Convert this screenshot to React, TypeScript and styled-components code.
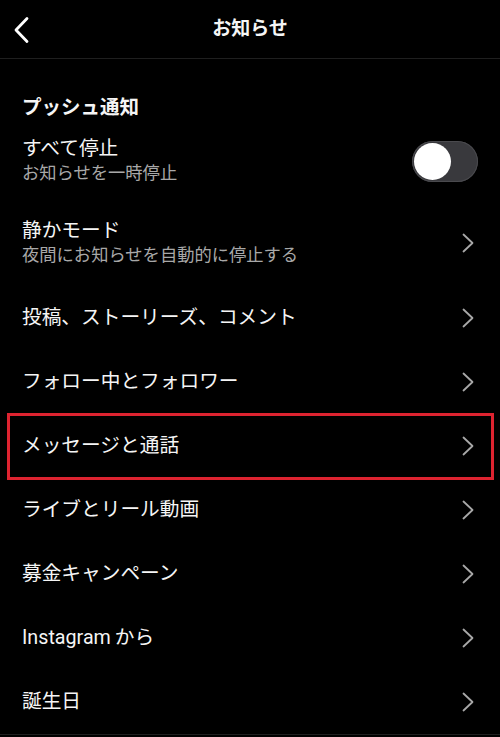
import React from 'react';
import styled, { createGlobalStyle } from 'styled-components';

const GlobalStyle = createGlobalStyle`
  html, body {
    margin: 0;
    padding: 0;
    background: #000;
  }
  body {
    font-family: Roboto, "Noto Sans CJK JP", "Noto Sans", sans-serif;
    color: #f5f5f5;
  }
`;

const Screen = styled.div`
  width: 500px;
  height: 737px;
  overflow: hidden;
  background: #000;
`;

const Header = styled.header`
  position: relative;
  height: 58px;
  display: flex;
  align-items: center;
  justify-content: center;
  border-bottom: 1px solid #1f1f1f;
`;

const BackButton = styled.button`
  position: absolute;
  left: 10px;
  top: 15px;
  width: 22px;
  height: 30px;
  padding: 0;
  border: none;
  background: none;
  display: flex;
  align-items: center;
  justify-content: center;
`;

const Title = styled.h1`
  margin: 0;
  font-size: 19px;
  font-weight: 700;
  line-height: 24px;
  color: #f5f5f5;
`;

const SectionTitle = styled.h2`
  margin: 0;
  padding: 29px 22px 0;
  height: 34px;
  display: flex;
  align-items: center;
  font-size: 19.5px;
  font-weight: 700;
  color: #f5f5f5;
`;

const List = styled.div`
  display: flex;
  flex-direction: column;
  border-bottom: 1px solid #1f1f1f;
`;

const Row = styled.div<{ $height: number; $highlight?: boolean }>`
  position: relative;
  height: ${(p) => p.$height}px;
  padding: 0 26px 0 22px;
  display: flex;
  align-items: center;
  justify-content: space-between;
  box-sizing: border-box;

  ${(p) =>
    p.$highlight &&
    `
    &::after {
      content: '';
      position: absolute;
      top: -1px;
      bottom: -2px;
      left: 7px;
      right: 6px;
      border: 3px solid #de2330;
      pointer-events: none;
    }
  `}
`;

const TextBlock = styled.div`
  display: flex;
  flex-direction: column;
  gap: 3px;
`;

const Label = styled.div`
  font-size: 19.7px;
  line-height: 22px;
  color: #f5f5f5;
`;

const SubLabel = styled.div`
  font-size: 17.3px;
  line-height: 21px;
  color: #a8a8a8;
`;

const Brand = styled.span`
  margin-right: 4px;
`;

const Toggle = styled.div`
  width: 66px;
  height: 41px;
  margin-right: -4px;
  border-radius: 21px;
  background: #39393d;
  box-shadow: inset 0 0 0 1px #4a4a4e;
  display: flex;
  align-items: center;
  padding: 2px;
  box-sizing: border-box;
`;

const Knob = styled.div`
  width: 37px;
  height: 37px;
  border-radius: 50%;
  background: #fff;
`;

const Chevron = () => (
  <svg width="12" height="20" viewBox="0 0 12 20" fill="none">
    <path d="M1.5 1.5 L10.5 10 L1.5 18.5" stroke="#a8a8a8" strokeWidth="1.8" strokeLinecap="round" strokeLinejoin="round" />
  </svg>
);

const items = [
  'フォロー中とフォロワー',
  'メッセージと通話',
  'ライブとリール動画',
  '募金キャンペーン',
  'Instagramから',
  '誕生日',
];

const renderLabel = (item: string) =>
  item.startsWith('Instagram') ? (
    <>
      <Brand>Instagram</Brand>
      {item.slice('Instagram'.length)}
    </>
  ) : (
    item
  );

export default function App() {
  return (
    <Screen>
      <GlobalStyle />
      <Header>
        <BackButton aria-label="戻る">
          <svg width="18" height="28" viewBox="0 0 18 28" fill="none">
            <path d="M15 2.5 L4 14 L15 25.5" stroke="#fff" strokeWidth="2.8" strokeLinecap="round" strokeLinejoin="round" />
          </svg>
        </BackButton>
        <Title>お知らせ</Title>
      </Header>
      <SectionTitle>プッシュ通知</SectionTitle>
      <List>
        <Row $height={78}>
          <TextBlock>
            <Label>すべて停止</Label>
            <SubLabel>お知らせを一時停止</SubLabel>
          </TextBlock>
          <Toggle>
            <Knob />
          </Toggle>
        </Row>
        <Row $height={86}>
          <TextBlock>
            <Label>静かモード</Label>
            <SubLabel>夜間にお知らせを自動的に停止する</SubLabel>
          </TextBlock>
          <Chevron />
        </Row>
        <Row $height={64}>
          <Label>投稿、ストーリーズ、コメント</Label>
          <Chevron />
        </Row>
        {items.map((item) => (
          <Row key={item} $height={64} $highlight={item === 'メッセージと通話'}>
            <Label>{renderLabel(item)}</Label>
            <Chevron />
          </Row>
        ))}
      </List>
    </Screen>
  );
}
